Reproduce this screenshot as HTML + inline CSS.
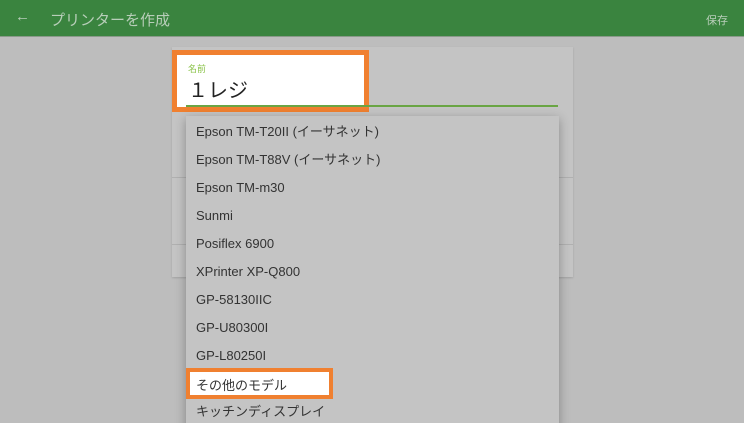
<!DOCTYPE html>
<html><head><meta charset="utf-8"><style>
*{margin:0;padding:0;box-sizing:border-box}
html,body{width:744px;height:423px;overflow:hidden}
body{background:#bdbdbd;font-family:"Liberation Sans","Noto Sans CJK JP",sans-serif;position:relative}
.hdr{position:absolute;left:0;top:0;width:744px;height:37px;background:#3a843f;border-bottom:1px solid #8a9a8a}
.hdr .t{position:absolute;left:50px;top:9px;font-size:15px;color:#b8ceb9}
.hdr .b{position:absolute;left:15px;top:8px;font-size:15px;color:#b8ceb9}
.hdr .s{position:absolute;right:16px;top:12px;font-size:11px;color:#b8ceb9}
.card{position:absolute;left:172px;top:47px;width:401px;height:230px;background:#c4c4c4;box-shadow:0 1px 2px rgba(0,0,0,.15)}
.dv{position:absolute;left:172px;width:401px;height:1px;background:#b0b0b0}
.ul{position:absolute;left:186px;top:105px;width:372px;height:2px;background:#6aa544}
.ob{position:absolute;left:172px;top:50px;width:197px;height:62px;border:5px solid #f08030;background:#fff}
.ob .l{position:absolute;left:11px;top:7px;font-size:9px;color:#8bc34a}
.ob .v{position:absolute;left:11px;top:23px;font-size:20px;color:#222;line-height:26px}
.ob .g{position:absolute;left:9px;bottom:0;width:183px;height:2px;background:#6aa544}
.dd{position:absolute;left:186px;top:116px;width:373px;height:320px;background:#c4c4c4;box-shadow:0 3px 10px rgba(0,0,0,.3)}
.it{position:absolute;left:10px;font-size:13px;color:#333;line-height:16px}
.ob2{position:absolute;left:186px;top:368px;width:147px;height:31px;border:4px solid #f08030;background:#fff}
.ob2 span{position:absolute;left:6px;top:3px;font-size:13px;color:#333}
</style></head><body>
<div class="hdr"><span class="b">←</span><span class="t">プリンターを作成</span><span class="s">保存</span></div>
<div class="card"></div>
<div class="dv" style="top:177px"></div>
<div class="dv" style="top:244px"></div>
<div class="ul"></div>
<div class="ob"><span class="l">名前</span><span class="v">１レジ</span><div class="g"></div></div>
<div class="dd">
<div class="it" style="top:8px">Epson TM-T20II (イーサネット)</div>
<div class="it" style="top:36px">Epson TM-T88V (イーサネット)</div>
<div class="it" style="top:64px">Epson TM-m30</div>
<div class="it" style="top:92px">Sunmi</div>
<div class="it" style="top:120px">Posiflex 6900</div>
<div class="it" style="top:148px">XPrinter XP-Q800</div>
<div class="it" style="top:176px">GP-58130IIC</div>
<div class="it" style="top:204px">GP-U80300I</div>
<div class="it" style="top:232px">GP-L80250I</div>
<div class="it" style="top:288px">キッチンディスプレイ</div>
</div>
<div class="ob2"><span>その他のモデル</span></div>
</body></html>
